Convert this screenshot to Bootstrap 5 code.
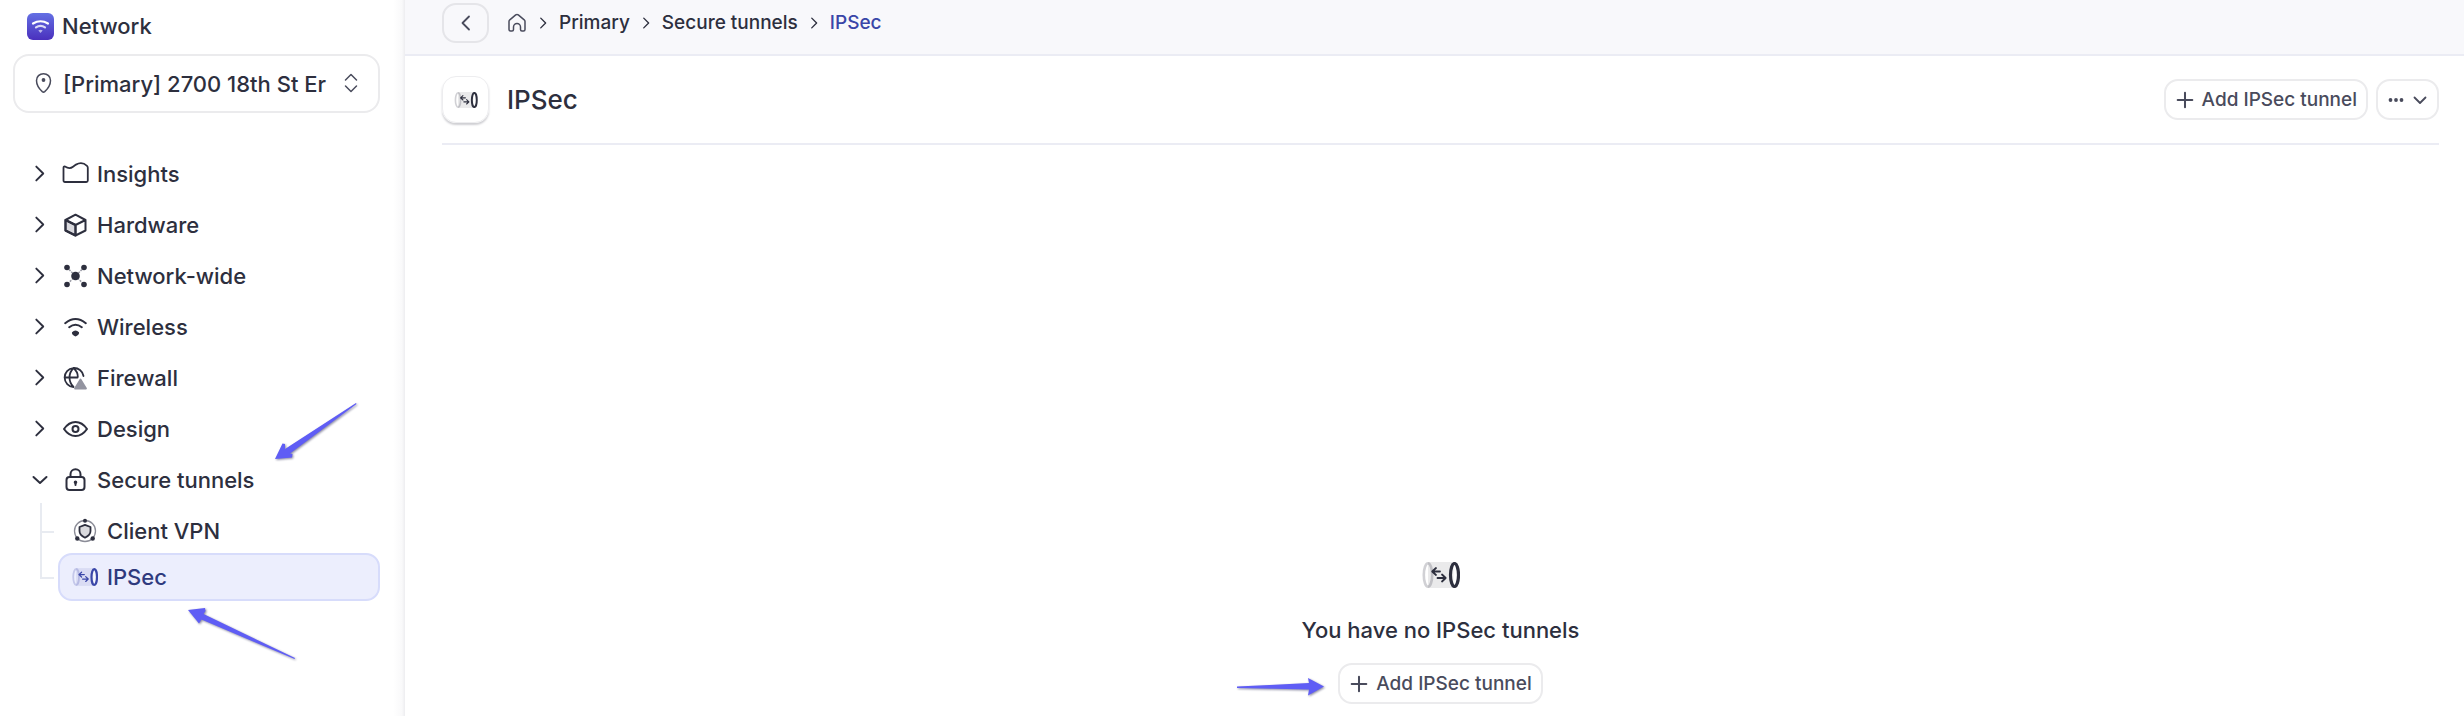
<!DOCTYPE html>
<html lang="en">
<head>
<meta charset="utf-8">
<meta name="viewport" content="width=device-width, initial-scale=1">
<title>IPSec – Network</title>
<link rel="stylesheet" href="https://cdn.jsdelivr.net/npm/bootstrap@5.3.0/dist/css/bootstrap.min.css">
<style>
  :root { --ink: #2d2f3e; --soft: #494b5c; --line: #ebebed; --rule: #ebecf4; --brand: #3a46a8; }
  body { font-family: Inter, "Liberation Sans", sans-serif; font-optical-sizing: none; font-weight: 500; font-size: 22px; line-height: 28px; color: var(--ink); }
  svg { display: block; flex: none; }
  a { color: inherit; text-decoration: none; }
  .side-panel { width: 405px; flex: none; padding: 12px 25px 0 13px; background: linear-gradient(to left, #ededf0 0, #f9f9fa 3px, #fff 12px); }
  .brand-row { padding-left: 14px; gap: 8px; height: 28px; margin-bottom: 14px; }
  .site-picker { height: 59px; margin-bottom: 35px; }
  .site-picker .form-select { height: 100%; padding: 0 44px 0 48px; border: 2px solid var(--line); border-radius: 16px; font-size: 22px; font-weight: 500; line-height: 28px; color: var(--ink); background: transparent; text-overflow: clip; }
  .site-picker svg { position: absolute; top: 18px; pointer-events: none; }
  .pin { left: 21px; }
  .updown { right: 21px; }
  .side-link { height: 51px; width: 100%; padding: 0 0 0 15px; border: 0; background: none; color: inherit; font-weight: 500; text-align: left; }
  .side-link .twist { margin-right: 11px; }
  .side-link .glyph { margin-right: 8px; }
  .sub-list { margin: 0 0 0 27px; padding: 4px 0 0 18px; position: relative; }
  .sub-list::before { content: ""; position: absolute; left: 0; top: -2px; bottom: 22px; border-left: 2px solid #e8ebf1; }
  .sub-link { position: relative; height: 44px; padding-left: 12px; border: 2px solid transparent; border-radius: 14px; gap: 9px; }
  .sub-link::before { content: ""; position: absolute; left: -20px; top: 50%; width: 14px; border-top: 2px solid #e8ebf1; }
  .sub-link.active { height: 48px; background: #eceefd; border-color: #d7dcfb; color: #2f3a7e; }
  .top-strip { height: 56px; padding: 3px 25px 11px 37px; background: #f8f8fb; border-bottom: 2px solid var(--rule); font-size: 19px; }
  .back-btn { width: 47px; height: 40px; border: 2px solid #e5e5e9; border-radius: 14px; background: none; color: var(--soft); }
  .crumbs { padding-left: 18px; gap: 10px; }
  .crumbs li { gap: 10px; }
  .here, .sub-link.active svg { color: var(--brand); }
  .page-body { padding: 20px 25px 12px 37px; }
  .title-row { border-bottom: 2px solid var(--rule); height: 69px; padding-bottom: 20px; }
  .title-tile { width: 47px; height: 47px; border-radius: 14px; border: 1px solid #ededef; box-shadow: 0 2px 2px #cfcfd3; margin-right: 18px; }
  .title-row h1 { font-size: 26px; line-height: 32px; font-weight: 500; margin: 0; }
  .tool-btn { height: 41px; border: 2px solid var(--line); border-radius: 14px; background: #fff; color: var(--soft); font-size: 19px; font-weight: 500; line-height: 24px; padding: 0 9px 0 10px; gap: 8px; }
  .blank-state { padding-top: 417px; color: var(--ink); }
  .blank-state p { padding: 4px 0 19px; }
  .note-arrow { position: absolute; pointer-events: none; filter: drop-shadow(1px 1px 1px #8888a0); }
  .note-arrow path { fill: #5f5df5; }
  .note-a { left: 274px; top: 400px; }
  .note-b { left: 187px; top: 606px; }
  .note-c { right: 100%; top: 14px; margin-right: 12px; }
</style>
</head>
<body>
<svg width="0" height="0" class="position-absolute" aria-hidden="true">
  <defs>
    <symbol id="right" viewBox="0 0 16 16"><path d="M5 1.500l6.500 6.500L5 14.500" fill="none" stroke="currentColor" stroke-width="1.800" stroke-linecap="round" stroke-linejoin="round"/></symbol>
    <symbol id="plus" viewBox="0 0 16 16"><path d="M8 1.500v13M1.500 8h13" fill="none" stroke="currentColor" stroke-width="1.800" stroke-linecap="round"/></symbol>
    <symbol id="tunnel" viewBox="0 0 38 26">
      <path d="M6 0h26v26H6z" fill="currentColor" opacity=".1"/>
      <ellipse cx="6" cy="13" rx="4.200" ry="11.700" fill="none" stroke="currentColor" stroke-width="2.600" opacity=".22"/>
      <ellipse cx="32.500" cy="13" rx="4" ry="11.500" fill="#fff" fill-opacity=".6" stroke="currentColor" stroke-width="3.200"/>
      <path d="M18 9.500h-7.500m3.500-3.500l-3.800 3.500 3.800 3.500M15.500 16h8m-3.500-3.500l3.700 3.500-3.700 3.500" fill="none" stroke="currentColor" stroke-width="1.800" stroke-linecap="round" stroke-linejoin="round"/>
    </symbol>
  </defs>
</svg>

<div class="d-flex min-vh-100 position-relative">
  <aside class="side-panel">
    <div class="brand-row d-flex align-items-center">
      <svg width="27" height="27" viewBox="0 0 27 27" aria-hidden="true">
        <defs><linearGradient id="g" x2="0" y2="1"><stop stop-color="#6470e4"/><stop offset="1" stop-color="#4a30bd"/></linearGradient></defs>
        <rect width="27" height="27" rx="6" fill="url(#g)"/>
        <g fill="none" stroke="#fff" stroke-width="2.200" stroke-linecap="round"><path d="M6 10.500q7.500-4.500 15 0"/><path d="M9 14.300q4.500-3 9 0" opacity=".8"/></g>
        <path d="M11.300 17.500q2.200-1.300 4.400 0L13.500 20z" fill="#fff" opacity=".6"/>
      </svg>
      <span>Network</span>
    </div>
    <div class="site-picker position-relative">
      <svg class="pin" width="20" height="22" viewBox="0 0 20 22" fill="none" stroke="#494b5c" stroke-width="1.500" aria-hidden="true"><path d="M9.500 1.700c4 0 7 2.900 7 6.700 0 4-3 8.600-5.800 11.200q-1.200 1-2.400 0C5.500 17 2.500 12.400 2.500 8.400c0-3.800 3-6.700 7-6.700z"/><circle cx="9.500" cy="8" r="1.900" fill="#494b5c" stroke="none"/></svg>
      <select class="form-select" aria-label="Site"><option>[Primary] 2700 18th St Er</option></select>
      <svg class="updown" width="16" height="22" viewBox="0 0 16 22" fill="none" stroke="#494b5c" stroke-width="1.500" stroke-linecap="round" stroke-linejoin="round" aria-hidden="true"><path d="M2.500 8L8 2.500 13.500 8M2.500 14L8 19.500l5.500-5.500"/></svg>
    </div>
    <nav aria-label="Network">
      <button class="side-link d-flex align-items-center" aria-expanded="false"><svg class="twist" width="23" height="17"><use href="#right"/></svg>
        <svg class="glyph" width="27" height="26" viewBox="0 0 27 26" fill="none" stroke="currentColor" stroke-width="1.800" stroke-linejoin="round"><path d="M1.500 7Q1.500 5 3 5.600q4.500 2.900 8 .2l3-2.200q6-3.400 11 1.200.8.800.8 2V19.500q0 1.500-1.500 1.500H3q-1.500 0-1.500-1.500z"/></svg>Insights</button>
      <button class="side-link d-flex align-items-center" aria-expanded="false"><svg class="twist" width="23" height="17"><use href="#right"/></svg>
        <svg class="glyph" width="27" height="26" viewBox="0 0 27 26" fill="none" stroke="currentColor" stroke-width="2" stroke-linejoin="round"><path d="M3.500 8l10 5v10.500l-10-5z" fill="#d9d9de"/><path d="M13.500 2.700L23.500 8v10.500l-10 5-10-5V8zM3.500 8l10 5 10-5M13.500 13v10.500"/></svg>Hardware</button>
      <button class="side-link d-flex align-items-center" aria-expanded="false"><svg class="twist" width="23" height="17"><use href="#right"/></svg>
        <svg class="glyph" width="27" height="26" viewBox="0 0 27 26" fill="currentColor"><path d="M5 4.500l17 17m0-17l-17 17" stroke="#9b9ca6" stroke-width="1.500" stroke-dasharray="2 1"/><circle cx="13.500" cy="13" r="4.300"/><circle cx="5" cy="4.500" r="2.800"/><circle cx="22" cy="4.500" r="2.800"/><circle cx="5" cy="21.500" r="2.800"/><circle cx="22" cy="21.500" r="2.800"/></svg>Network-wide</button>
      <button class="side-link d-flex align-items-center" aria-expanded="false"><svg class="twist" width="23" height="17"><use href="#right"/></svg>
        <svg class="glyph" width="27" height="26" viewBox="0 0 27 26" fill="none" stroke="currentColor" stroke-width="2" stroke-linecap="round"><path d="M3.200 9.200q10.300-8.400 20.600 0M7.200 13.200q6.300-5 12.600 0"/><path d="M10 18.200q3.500-3.600 7 0 .8 2.200-3.500 4.300-4.300-2.100-3.500-4.300z" fill="currentColor" stroke="none"/></svg>Wireless</button>
      <button class="side-link d-flex align-items-center" aria-expanded="false"><svg class="twist" width="23" height="17"><use href="#right"/></svg>
        <svg class="glyph" width="27" height="26" viewBox="0 0 27 26" fill="none" stroke="currentColor" stroke-width="1.800" stroke-linecap="round" stroke-linejoin="round"><path d="M11.500 22A9.500 9.500 0 1 1 21.500 11M3 12.500h12.500M11.500 22Q7.500 18 7.500 12.500T11.500 3Q16 7 15.800 12"/><path d="M18.500 14.500L24 23.500H13z" fill="#9394a0" stroke="#9394a0"/></svg>Firewall</button>
      <button class="side-link d-flex align-items-center" aria-expanded="false"><svg class="twist" width="23" height="17"><use href="#right"/></svg>
        <svg class="glyph" width="27" height="26" viewBox="0 0 27 26" fill="none" stroke="currentColor" stroke-width="2"><path d="M2 13q4.800-7 11.500-7T25 13q-4.800 7-11.500 7T2 13z" stroke-linejoin="round"/><circle cx="13.500" cy="13" r="3"/></svg>Design</button>
      <button class="side-link d-flex align-items-center" aria-expanded="true"><svg class="twist" width="23" height="17" viewBox="0 0 23 17"><path d="M5.500 6l6.500 6 6.500-6" fill="none" stroke="currentColor" stroke-width="2" stroke-linecap="round" stroke-linejoin="round"/></svg>
        <svg class="glyph" width="27" height="26" viewBox="0 0 27 26" fill="none" stroke="currentColor" stroke-width="2" stroke-linecap="round"><rect x="4.500" y="10" width="18" height="13" rx="3"/><path d="M8.500 10V7.300a5 5 0 0 1 10 0V10M13.500 15.500v2.500"/><circle cx="13.500" cy="15.300" r=".8"/></svg>Secure tunnels</button>
      <div class="sub-list">
        <a href="#" class="sub-link d-flex align-items-center"><svg width="26" height="26" viewBox="0 0 26 26" fill="none" stroke="currentColor"><circle cx="13" cy="13" r="10.500" stroke="#8b8c97" stroke-width="1.300"/><path d="M13 6.800l5.500 2.200v4q0 4-5.500 6.700Q7.500 17 7.500 13V9z" fill="#dadade" stroke-width="1.800" stroke-linejoin="round"/><g fill="currentColor" stroke="none"><circle cx="13" cy="2.800" r="2"/><circle cx="5.300" cy="20.500" r="2.200"/><circle cx="20.700" cy="20.500" r="2.200"/></g></svg>Client VPN</a>
        <a href="#" class="sub-link active d-flex align-items-center" aria-current="page"><svg width="26" height="18"><use href="#tunnel"/></svg>IPSec</a>
      </div>
    </nav>
  </aside>

  <main class="flex-grow-1">
    <div class="top-strip d-flex align-items-center">
      <button class="back-btn d-flex align-items-center justify-content-center p-0" aria-label="Back"><svg width="16" height="16" viewBox="0 0 16 16"><path d="M11 1.500L4.500 8l6.500 6.500" fill="none" stroke="currentColor" stroke-width="1.800" stroke-linecap="round" stroke-linejoin="round"/></svg></button>
      <nav aria-label="Breadcrumb">
        <ol class="crumbs list-unstyled d-flex align-items-center mb-0">
          <li class="d-flex align-items-center"><a href="#" aria-label="Home"><svg width="20" height="20" viewBox="0 0 20 20" fill="none" stroke="#494b5c" stroke-width="1.500" stroke-linejoin="round"><path d="M2 8.500q0-1 .8-1.700l5.900-4.900q1.300-1 2.600 0l5.900 4.900q.8.700.8 1.700v8q0 1.500-1.500 1.500H15q-1.500 0-1.500-1.500V14a3.500 3.500 0 0 0-7 0v2.500Q6.500 18 5 18H3.500Q2 18 2 16.500z"/></svg></a><svg width="12" height="12"><use href="#right"/></svg></li>
          <li class="d-flex align-items-center"><a href="#">Primary</a><svg width="12" height="12"><use href="#right"/></svg></li>
          <li class="d-flex align-items-center"><a href="#">Secure tunnels</a><svg width="12" height="12"><use href="#right"/></svg></li>
          <li class="here" aria-current="page">IPSec</li>
        </ol>
      </nav>
    </div>
    <div class="page-body">
      <header class="title-row d-flex align-items-center">
        <div class="title-tile d-flex align-items-center justify-content-center"><svg width="24" height="16"><use href="#tunnel"/></svg></div>
        <h1>IPSec</h1>
        <div class="d-flex gap-2 ms-auto">
          <button class="tool-btn d-flex align-items-center"><svg width="18" height="18"><use href="#plus"/></svg>Add IPSec tunnel</button>
          <button class="tool-btn d-flex align-items-center" aria-label="More actions"><svg width="16" height="16" viewBox="0 0 16 16" fill="currentColor"><circle cx="2.500" cy="8" r="1.900"/><circle cx="8" cy="8" r="1.900"/><circle cx="13.500" cy="8" r="1.900"/></svg><svg width="16" height="16" viewBox="0 0 16 16"><path d="M2.500 5.500L8 11l5.500-5.500" fill="none" stroke="currentColor" stroke-width="1.800" stroke-linecap="round" stroke-linejoin="round"/></svg></button>
        </div>
      </header>
      <section class="blank-state d-flex flex-column align-items-center">
        <svg width="38" height="26" class="mb-4"><use href="#tunnel"/></svg>
        <p class="mb-0">You have no IPSec tunnels</p>
        <div class="position-relative">
          <button class="tool-btn d-flex align-items-center"><svg width="18" height="18"><use href="#plus"/></svg>Add IPSec tunnel</button>
          <svg class="note-arrow note-c" width="90" height="20" viewBox="0 0 90 20" aria-hidden="true"><path d="M1 9.500L73 6l-1-5 16 8.500-16 9 1-6L1 11z"/></svg>
        </div>
      </section>
    </div>
  </main>

  <svg class="note-arrow note-a" width="84" height="62" viewBox="0 0 84 62" aria-hidden="true"><path d="M82 3L82.500 4 16 53.500l2.500.5-.5 3.500L1 59 8.500 43.500l2.500.5v5z"/></svg>
  <svg class="note-arrow note-b" width="112" height="56" viewBox="0 0 112 56" aria-hidden="true"><path d="M108 52l-.5 1L14.500 13.500 12 17.500 1 4l17-2 .5 3-2 3z"/></svg>
</div>
<script src="https://cdn.jsdelivr.net/npm/bootstrap@5.3.0/dist/js/bootstrap.bundle.min.js"></script>
</body>
</html>
